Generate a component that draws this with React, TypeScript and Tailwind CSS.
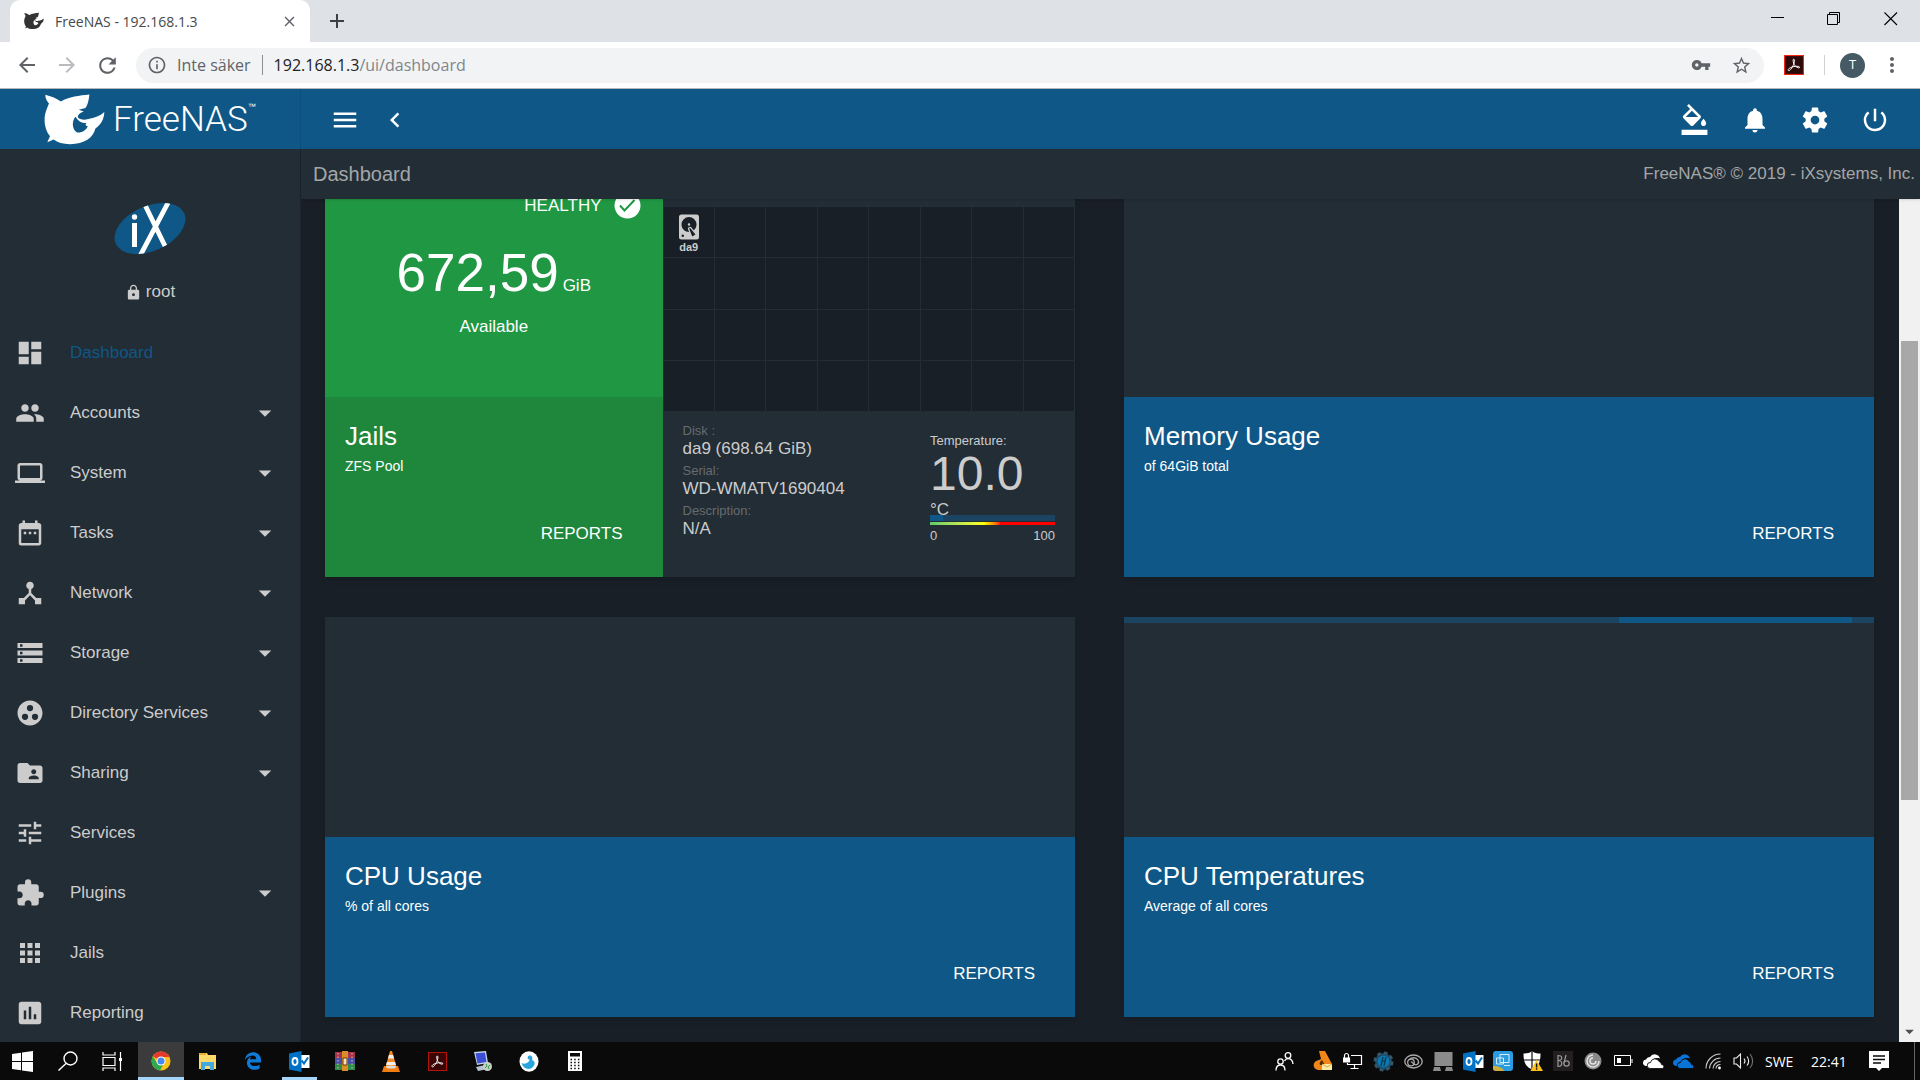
import React from "react";
import {
  MdDashboard, MdPeople, MdLaptop, MdDateRange, MdDeviceHub, MdStorage, MdGroupWork,
  MdFolderShared, MdTune, MdExtension, MdApps, MdAssessment, MdArrowDropDown, MdLock,
  MdMenu, MdChevronLeft, MdFormatColorFill, MdNotifications, MdPowerSettingsNew,
  MdVpnKey, MdStarBorder, MdMoreVert, MdArrowBack, MdArrowForward, MdRefresh,
  MdInfoOutline, MdClose, MdAdd,
} from "react-icons/md";
import { FaEdgeLegacy } from "react-icons/fa6";

const SHARK =
  "M47 28C62 32 80 38 94 48C118 34 150 30 180 27C178 45 175 58 168 68L148 73L163 78C150 83 142 90 146 97C156 104 166 104 176 101C196 98 212 92 225 80C224 102 215 118 198 130C192 158 165 177 122 177C100 177 84 172 72 163L53 171L61 153C47 135 42 112 46 88C49 74 54 64 58 54C51 47 47 38 47 28ZM138 94C127 106 126 132 143 142C160 143 172 132 175 122C168 122 166 118 172 112C158 116 146 108 138 94Z";

function Shark({ className }: { className?: string }) {
  return (
    <svg viewBox="43 26 184 153" className={className} aria-hidden="true">
      <path d={SHARK} fill="currentColor" fillRule="evenodd" />
    </svg>
  );
}

function Acrobat({ className, bg, edge }: { className?: string; bg: string; edge: string }) {
  return (
    <svg viewBox="0 0 20 20" className={className} aria-hidden="true">
      <rect x="0.5" y="0.5" width="19" height="19" fill={bg} stroke={edge} strokeWidth="1.2" />
      <path
        d="M9.6 4.2c1.4 0 .9 3-.2 5.6C8.2 12.6 6 16 4.5 15.6c-1.5-.6.8-3 4.2-3.800 3.400-.8 7-.7 6.900.5-.1 1.400-3.300.1-4.800-1.900C9.500 8.600 8.400 4.300 9.600 4.200Z"
        fill="none" stroke="#fff" strokeWidth="1"
      />
    </svg>
  );
}

function Cog({ className }: { className?: string }) {
  return (
    <svg viewBox="0 0 24 24" className={className} fill="currentColor" aria-hidden="true">
      <path d="M12,15.5A3.5,3.5 0 0,1 8.5,12A3.5,3.5 0 0,1 12,8.5A3.5,3.5 0 0,1 15.5,12A3.5,3.5 0 0,1 12,15.5M19.43,12.97C19.47,12.65 19.5,12.33 19.5,12C19.5,11.67 19.47,11.34 19.43,11L21.54,9.37C21.73,9.22 21.78,8.95 21.66,8.73L19.66,5.27C19.54,5.05 19.27,4.96 19.05,5.05L16.56,6.05C16.04,5.66 15.5,5.32 14.87,5.07L14.5,2.42C14.46,2.18 14.25,2 14,2H10C9.75,2 9.54,2.18 9.5,2.42L9.13,5.07C8.5,5.32 7.96,5.66 7.44,6.05L4.95,5.05C4.73,4.96 4.46,5.05 4.34,5.27L2.34,8.73C2.21,8.95 2.27,9.22 2.46,9.37L4.57,11C4.53,11.34 4.5,11.67 4.5,12C4.5,12.33 4.53,12.65 4.57,12.97L2.46,14.63C2.27,14.78 2.21,15.05 2.34,15.27L4.34,18.73C4.46,18.95 4.73,19.03 4.95,18.95L7.44,17.94C7.96,18.34 8.5,18.68 9.13,18.93L9.5,21.58C9.54,21.82 9.75,22 10,22H14C14.25,22 14.46,21.82 14.5,21.58L14.87,18.93C15.5,18.67 16.04,18.34 16.56,17.94L19.05,18.95C19.27,19.03 19.54,18.95 19.66,18.73L21.66,15.27C21.78,15.05 21.73,14.78 21.54,14.63L19.43,12.97Z" />
    </svg>
  );
}

function HardDisk({ className }: { className?: string }) {
  return (
    <svg viewBox="0 0 24 24" className={className} fill="currentColor" aria-hidden="true">
      <path d="M6,2H18A2,2 0 0,1 20,4V20A2,2 0 0,1 18,22H6A2,2 0 0,1 4,20V4A2,2 0 0,1 6,2M12,4A6,6 0 0,0 6,10C6,13.31 8.69,16 12.1,16L11.22,13.77C10.95,13.29 11.11,12.68 11.59,12.4L12.45,11.9C12.93,11.63 13.54,11.79 13.82,12.27L15.74,14.69C17.12,13.59 18,11.9 18,10A6,6 0 0,0 12,4M12,9A1,1 0 0,1 13,10A1,1 0 0,1 12,11A1,1 0 0,1 11,10A1,1 0 0,1 12,9M7,18A1,1 0 0,0 6,19A1,1 0 0,0 7,20A1,1 0 0,0 8,19A1,1 0 0,0 7,18M12.09,13.27L14.58,19.58L17.17,18.08L12.95,12.77L12.09,13.27Z" />
    </svg>
  );
}

function BrowserChrome() {
  return (
    <header className="shrink-0 font-['Open_Sans',sans-serif]">
      <div className="flex h-[42px] items-end justify-between bg-[#dee1e6]">
        <div className="flex h-full items-center">
          <div className="ml-[10px] flex h-full w-[300px] items-center rounded-t-[10px] bg-white pr-3 pl-[14px]">
            <Shark className="h-5 w-5 text-[#333]" />
            <span className="ml-[11px] flex-1 text-[14px] text-[#45484c]">FreeNAS - 192.168.1.3</span>
            <button aria-label="Close tab" className="text-[#5f6368]"><MdClose size={17} /></button>
          </div>
          <button aria-label="New tab" className="ml-[15px] text-[#3c4043]"><MdAdd size={24} /></button>
        </div>
        <div className="flex h-full items-start pt-3 text-black">
          <button aria-label="Minimize" className="flex w-[56px] justify-center">
            <svg width="14" height="14" viewBox="0 0 14 14"><path d="M0 5.5h13" stroke="currentColor" /></svg>
          </button>
          <button aria-label="Restore" className="flex w-[56px] justify-center">
            <svg width="14" height="14" viewBox="0 0 14 14"><path d="M.5 2.5h10v10H.5zM2.5 2.5v-2h10v10h-2" fill="none" stroke="currentColor" /></svg>
          </button>
          <button aria-label="Close" className="flex w-[58px] justify-center">
            <svg width="14" height="14" viewBox="0 0 14 14"><path d="M.5.5l12.5 12.5M13 .5L.5 13" stroke="currentColor" strokeWidth="1.1" /></svg>
          </button>
        </div>
      </div>
      <div className="flex h-[47px] items-center border-b border-[#b4b6b9] bg-white pr-4 pl-[15px] text-[#5f6368]">
        <button aria-label="Back" className="mr-4"><MdArrowBack size={24} /></button>
        <button aria-label="Forward" className="mr-4 text-[#b9bbbe]"><MdArrowForward size={24} /></button>
        <button aria-label="Reload" className="mr-4"><MdRefresh size={25} /></button>
        <div className="flex h-[35px] flex-1 items-center rounded-full bg-[#f1f3f4] pr-3 pl-[11px]">
          <MdInfoOutline size={20} />
          <span className="ml-[10px] text-[16px]">Inte säker</span>
          <span className="mx-[11px] h-5 w-px bg-[#8a8d91]" />
          <label className="flex flex-1 items-center text-[16px]">
            <span className="text-[#202124]">192.168.1.3</span>
            <input aria-label="Address" defaultValue="/ui/dashboard" className="min-w-0 flex-1 bg-transparent text-[#80868b] outline-none" />
          </label>
          <button aria-label="Passwords" className="mr-5"><MdVpnKey size={20} /></button>
          <button aria-label="Bookmark"><MdStarBorder size={21} /></button>
        </div>
        <button aria-label="Acrobat" className="ml-5"><Acrobat className="h-5 w-5" bg="#2b0a0a" edge="#f22613" /></button>
        <span className="mr-[15px] ml-5 h-5 w-px bg-[#cfd1d4]" />
        <button className="flex h-[25px] w-[25px] items-center justify-center rounded-full bg-[#455a64] text-[13px] text-white">T</button>
        <button aria-label="Menu" className="ml-[15px]"><MdMoreVert size={24} /></button>
      </div>
    </header>
  );
}

const NAV = [
  { label: "Dashboard", Icon: MdDashboard, active: true },
  { label: "Accounts", Icon: MdPeople, sub: true },
  { label: "System", Icon: MdLaptop, sub: true },
  { label: "Tasks", Icon: MdDateRange, sub: true },
  { label: "Network", Icon: MdDeviceHub, sub: true },
  { label: "Storage", Icon: MdStorage, sub: true },
  { label: "Directory Services", Icon: MdGroupWork, sub: true },
  { label: "Sharing", Icon: MdFolderShared, sub: true },
  { label: "Services", Icon: MdTune },
  { label: "Plugins", Icon: MdExtension, sub: true },
  { label: "Jails", Icon: MdApps },
  { label: "Reporting", Icon: MdAssessment },
];

function Sidebar() {
  return (
    <aside className="flex w-[301px] shrink-0 flex-col overflow-hidden border-r border-[#1d252c] bg-[#232d35] text-[#ccc]">
      <div className="flex h-[174px] shrink-0 flex-col items-center pt-[53px]">
        <svg width="72" height="53" viewBox="0 0 72 53" role="img" aria-label="iX">
          <defs>
            <clipPath id="ix"><ellipse cx="36" cy="26.5" rx="37.5" ry="22.5" transform="rotate(-24 36 26.5)" /></clipPath>
          </defs>
          <g clipPath="url(#ix)">
            <rect width="72" height="53" fill="#0e5786" />
            <path d="M31 3L51 44M55.5-2L26 54" stroke="#fff" strokeWidth="4.8" />
            <path d="M20.5 21v24" stroke="#fff" strokeWidth="5" />
            <circle cx="20.5" cy="15" r="2.7" fill="#fff" />
          </g>
        </svg>
        <div className="mt-[25px] flex items-center gap-1 text-[17px] leading-6">
          <MdLock size={17} />
          <span>root</span>
        </div>
      </div>
      <nav>
        {NAV.map(({ label, Icon, sub, active }) => {
          const body = (
            <>
              <Icon size={30} />
              <span className={active ? "ml-[25px] flex-1 text-[#0e5786]" : "ml-[25px] flex-1"}>{label}</span>
              {sub && <MdArrowDropDown size={30} />}
            </>
          );
          return sub ? (
            <button key={label} className="flex h-[60px] w-full items-center pr-5 pl-[15px] text-left text-[17px]">{body}</button>
          ) : (
            <a key={label} href="#" className="flex h-[60px] items-center pr-5 pl-[15px] text-[17px]">{body}</a>
          );
        })}
      </nav>
    </aside>
  );
}

function TopBar() {
  return (
    <div className="flex h-[60px] shrink-0 bg-[#0e5786] text-white">
      <a href="#" aria-label="FreeNAS home" className="flex w-[301px] items-center border-r border-[#0c4f7a] pl-[44px]">
        <Shark className="h-[51px] w-[61px]" />
        <span className="ml-2 font-['Roboto',sans-serif] text-[35px] leading-none font-light">FreeNAS</span>
        <span className="mb-6 text-[8px]">™</span>
      </a>
      <div className="flex flex-1 items-center pt-px pr-[30px] pl-[29px]">
        <button aria-label="Toggle menu"><MdMenu size={30} /></button>
        <button aria-label="Collapse" className="ml-5"><MdChevronLeft size={30} /></button>
        <div className="ml-auto flex gap-[30px]">
          <button aria-label="Theme"><MdFormatColorFill size={31} /></button>
          <button aria-label="Notifications"><MdNotifications size={30} /></button>
          <button aria-label="Settings"><Cog className="h-[30px] w-[30px]" /></button>
          <button aria-label="Power"><MdPowerSettingsNew size={30} /></button>
        </div>
      </div>
    </div>
  );
}

function CardFooter({ title, sub, green }: { title: string; sub: string; green?: boolean }) {
  return (
    <div className={green ? "flex h-[180px] flex-col bg-[#1e873b] px-5 pt-[21px] text-white" : "flex h-[180px] flex-col bg-[#0e5786] px-5 pt-[21px] text-white"}>
      <h2 className="text-[26px] leading-9">{title}</h2>
      <p className="text-[14px] leading-6">{sub}</p>
      <button className="mt-auto mr-5 mb-[31px] self-end text-[17px] leading-6">REPORTS</button>
    </div>
  );
}

function UsageCard({ title, sub, loading }: { title: string; sub: string; loading?: boolean }) {
  return (
    <section className="flex h-[400px] flex-col bg-[#232d35] shadow-md">
      <div className="flex-1">
        {loading && (
          <div className="h-[6px] bg-[#1b4362]">
            <div className="ml-[66%] h-full w-[31%] bg-[#0e5786]" />
          </div>
        )}
      </div>
      <CardFooter title={title} sub={sub} />
    </section>
  );
}

const DISK = [
  ["Disk :", "da9 (698.64 GiB)"],
  ["Serial:", "WD-WMATV1690404"],
  ["Description:", "N/A"],
];

function PoolCard() {
  return (
    <section className="flex h-[400px] bg-[#232d35] shadow-md">
      <div className="flex w-[45%] flex-col bg-[#209743] text-white">
        <div className="flex h-[220px] flex-col items-center">
          <div className="flex h-[30px] items-center gap-3 self-end pt-[27px] pr-[22px]">
            <span className="pt-px text-[17px] leading-5">HEALTHY</span>
            <svg width="27" height="27" viewBox="0 0 27 27" aria-hidden="true">
              <circle cx="13.5" cy="13.5" r="13" fill="#fff" />
              <path d="M6 13.5l4.5 5L20.5 8" fill="none" stroke="#209743" strokeWidth="2" />
            </svg>
          </div>
          <div className="mt-[36px] flex items-baseline gap-1">
            <span className="text-[53px] leading-[60px]">672,59</span>
            <span className="text-[17px] leading-6">GiB</span>
          </div>
          <span className="mt-3 text-[17px] leading-6">Available</span>
        </div>
        <CardFooter title="Jails" sub="ZFS Pool" green />
      </div>
      <div className="flex flex-1 flex-col pt-[30px] text-[#ccc]">
        <div className="grid h-[204px] grid-cols-8 grid-rows-4 gap-px px-px">
          {Array.from({ length: 32 }, (_, i) => (
            <div key={i} className="flex flex-col items-center bg-[#191f27] pt-[5px]">
              {i === 0 && (
                <>
                  <HardDisk className="h-[30px] w-[30px]" />
                  <span className="text-[11px] leading-[10px] font-bold">da9</span>
                </>
              )}
            </div>
          ))}
        </div>
        <div className="flex justify-between pt-3 pr-5 pl-5">
          <dl className="flex flex-col gap-1">
            {DISK.map(([k, v]) => (
              <div key={k}>
                <dt className="text-[13px] leading-4 text-[#666b70]">{k}</dt>
                <dd className="text-[17px] leading-5">{v}</dd>
              </div>
            ))}
          </dl>
          <div className="w-[125px] pt-[10px]">
            <div className="text-[13px] leading-4">Temperature:</div>
            <div className="text-[48px] leading-[49px]">10.0</div>
            <div className="h-[17px] text-[17px] leading-6">°C</div>
            <div className="h-[6px] bg-[#1b4362]">
              <div className="h-full w-[10%] bg-[#0e5786]" />
            </div>
            <div className="mt-px h-[3px] bg-linear-to-r from-[#5ecb6b] via-[#ffff00] via-43% to-[#ff0000] to-56%" />
            <div className="flex justify-between pt-[3px] text-[13px] leading-4">
              <span>0</span>
              <span>100</span>
            </div>
          </div>
        </div>
      </div>
    </section>
  );
}

function OutlookIcon() {
  return (
    <svg width="21" height="21" viewBox="0 0 21 21" aria-hidden="true">
      <rect x="10" y="4" width="10.5" height="13" fill="#fff" />
      <path d="M12.5 9.500l2.500 3L19 6.500" fill="none" stroke="#0072c6" strokeWidth="2" />
      <path d="M0 2.5L12.5 0v21L0 18.5z" fill="#0072c6" />
      <ellipse cx="6" cy="10.5" rx="2.5" ry="3.5" fill="none" stroke="#fff" strokeWidth="1.8" />
    </svg>
  );
}

function Cloud({ fill }: { fill: string }) {
  return (
    <svg width="21" height="15" viewBox="0 0 21 15" fill={fill} aria-hidden="true">
      <path d="M2.5 12A3.3 3.3 0 013 5.5 4 4 0 017 3a5.500 5.500 0 0110 1.500C12 3 9 5 8 8c-3 0-4 2-3.500 4z" />
      <path d="M7 14.500a3 3 0 01.5-6 4.500 4.500 0 018.500-1 3.500 3.500 0 012.500 3c3 .2 3 4 .5 4z" stroke="#0a0a0a" strokeWidth=".8" />
    </svg>
  );
}

const APPS: { name: string; icon: React.ReactNode; cls?: string }[] = [
  {
    name: "Chrome", cls: "flex w-[46px] items-center justify-center border-b-[3px] border-[#a5d5fb] bg-[#3b3b3b] pt-[3px]",
    icon: (
      <svg width="20" height="20" viewBox="0 0 20 20">
        <circle cx="10" cy="10" r="9.5" fill="#fbc116" />
        <path d="M10 10L1.8 5.2A9.5 9.5 0 0118.2 5.2L18.5 6H10z" fill="#e33b2e" />
        <path d="M1.8 5.2A9.5 9.5 0 009 19.5l4-7.5L6 12z" fill="#2da94f" />
        <circle cx="10" cy="10" r="4.5" fill="#fff" /><circle cx="10" cy="10" r="3.5" fill="#4688f1" />
      </svg>
    ),
  },
  {
    name: "Explorer",
    icon: (
      <svg width="19" height="19" viewBox="0 0 19 19">
        <path d="M1 1h8l1 2h8v14H1z" fill="#ffd869" /><path d="M1 1h7v2H1z" fill="#e8b02c" />
        <path d="M3 18v-8h13v8h-4v-4H7v4z" fill="#3fa9e0" />
      </svg>
    ),
  },
  { name: "Edge", icon: <FaEdgeLegacy size={18} className="text-[#0f7bd8]" /> },
  { name: "Outlook", cls: "relative flex w-[46px] items-center justify-center", icon: <OutlookIcon /> },
  {
    name: "WinRAR",
    icon: (
      <svg width="20" height="20" viewBox="0 0 20 20">
        <path d="M0 1h20v6H0z" fill="#a8324a" /><path d="M0 7h20v6H0z" fill="#4a4fa8" /><path d="M0 13h20v6H0z" fill="#2f8a4b" />
        <path d="M7 0h6v20H7z" fill="#d98d26" /><path d="M8 7h4v7H8z" fill="#f4e2b8" stroke="#6b3b10" />
        <path d="M3 2v16M17 2v16" stroke="#d8c9a0" strokeDasharray="1.5 2" />
      </svg>
    ),
  },
  {
    name: "VLC",
    icon: (
      <svg width="18" height="21" viewBox="0 0 18 21">
        <path d="M8 0h2l4.5 16h-11z" fill="#f58a1f" /><path d="M6.9 4h4.2l1 3.5H5.9zM4.9 11h8.200l.8 3H4.100z" fill="#eee" />
        <path d="M2 15h14l2 6H0z" fill="#f07c12" /><ellipse cx="9" cy="16" rx="5" ry="1.5" fill="#ddd" />
      </svg>
    ),
  },
  { name: "Acrobat", icon: <Acrobat className="h-[19px] w-[19px]" bg="#3a0505" edge="#b3130b" /> },
  {
    name: "Remote Desktop",
    icon: (
      <svg width="20" height="21" viewBox="0 0 20 21">
        <path d="M1 1l12-1 2 12-11 2z" fill="#c9d6ea" /><path d="M2.5 2.3l9.500-.8 1.500 9.500-9 1.500z" fill="#3a4fd6" />
        <path d="M3 16l9-2 3 4-10 2z" fill="#b9c3cf" /><circle cx="14.5" cy="15.5" r="4.5" fill="#c8d0c8" />
        <path d="M12 17l2-2-1-2M17 14l-2 2 1 2" stroke="#2c9b3c" fill="none" />
      </svg>
    ),
  },
  {
    name: "Maps",
    icon: (
      <svg width="20" height="21" viewBox="0 0 20 21">
        <ellipse cx="10" cy="10.5" rx="9.5" ry="10.2" fill="#fff" />
        <path d="M2.5 12c4 2 8-1 8-3.500C8 8.500 8 5 10.500 4.500S14 7 13 9c3 1 4.500 5-1 8.500C8 19 4 17 2.500 12z" fill="#28a5dc" />
      </svg>
    ),
  },
  {
    name: "Calculator",
    icon: (
      <svg width="14" height="20" viewBox="0 0 14 20">
        <path d="M0 0h14v20H0z" fill="#fff" /><path d="M2 2h10v3.5H2z" fill="#0a0a0a" />
        <path d="M2.5 8.5h10M2.5 11.5h10M2.5 14.5h10M2.5 17.5h10" stroke="#0a0a0a" strokeWidth="1.5" strokeDasharray="1.5 2.2" />
      </svg>
    ),
  },
];

const TRAY: { name: string; icon: React.ReactNode }[] = [
  {
    name: "Drive",
    icon: (
      <svg width="20" height="20" viewBox="0 0 20 20">
        <path d="M6 0h6l7 13-4 6H5c-6-1-6-9 1-10l2-1z" fill="#f0861a" /><path d="M9 9l3 5H7c-1-2 0-4 2-5z" fill="#5b2d05" />
        <path d="M9 13h10v6H9z" fill="#fbe9a8" /><path d="M9 13l5 3 5-3" stroke="#d9a93a" fill="none" />
      </svg>
    ),
  },
  {
    name: "Network lock",
    icon: (
      <svg width="20" height="18" viewBox="0 0 20 18" fill="none" stroke="#fff" strokeWidth="1.2">
        <path d="M8 3.500h10.500v9H4.500V11M11.500 13v3.500M7.500 16.500h8" /><path d="M1.500 6V3.500a2 2 0 014 0V6" />
        <path d="M.5 6h6v4h-6z" fill="#fff" />
      </svg>
    ),
  },
  {
    name: "HP",
    icon: (
      <svg width="21" height="21" viewBox="0 0 21 21">
        <circle cx="10.5" cy="10.5" r="8.5" fill="#1c4a68" stroke="#35566c" strokeWidth="3" strokeDasharray="3.700 2.980" />
        <circle cx="10.5" cy="10.5" r="6" fill="#0c78b0" /><path d="M8 15l2-9M11 15l2-9M9 10h3" stroke="#0b3550" strokeWidth="1.2" />
      </svg>
    ),
  },
  {
    name: "Creative Cloud",
    icon: (
      <svg width="19" height="15" viewBox="0 0 19 15" fill="none" stroke="#aaa" strokeWidth="1.3">
        <ellipse cx="9.5" cy="7.5" rx="8.7" ry="6.5" /><circle cx="7" cy="8.500" r="3.300" /><path d="M5 6a5 4 0 019 0c2 4-2 6-4 4L7 7.500" />
      </svg>
    ),
  },
  {
    name: "Devices",
    icon: (
      <svg width="20" height="19" viewBox="0 0 20 19" fill="#8b8b8b">
        <path d="M1.5 0h18v14h-18zM1 15h6l1 4H0zM13 15h6l1 4h-8z" />
      </svg>
    ),
  },
  { name: "Outlook", icon: <OutlookIcon /> },
  {
    name: "Intel",
    icon: (
      <svg width="20" height="20" viewBox="0 0 20 20">
        <rect width="20" height="20" rx="3" fill="#2b9be0" /><path d="M0 15c6 0 10 2 11 5H3a3 3 0 01-3-3z" fill="#cfae3e" />
        <path d="M7 3.500h9v8H7zM3.500 7h7v6h-7zM11 14.500h6" fill="none" stroke="#d3eefc" strokeWidth="1" />
      </svg>
    ),
  },
  {
    name: "Security",
    icon: (
      <svg width="20" height="20" viewBox="0 0 20 20">
        <path d="M9 0c2 2 5 2.500 8.500 2.500 0 8-1.500 13-8.500 16C2 15.500.5 10.500.5 2.500 4 2.500 7 2 9 0z" fill="#fff" />
        <path d="M9 0v19M0 9h18" stroke="#0a0a0a" strokeWidth="1.2" /><path d="M13.5 9l6.500 11H7.500z" fill="#fcbf1c" />
        <path d="M13.6 12.500v4M13.600 17.300v1.500" stroke="#111" strokeWidth="1.4" />
      </svg>
    ),
  },
  {
    name: "Bang & Olufsen",
    icon: (
      <svg width="20" height="20" viewBox="0 0 20 20">
        <rect width="20" height="20" fill="#231f20" />
        <path d="M5 4v12M5 4.500c5 0 5 5 0 5 5 0 5 6 0 6M13 4l-2 8" fill="none" stroke="#999" strokeWidth="1.2" /><circle cx="13.5" cy="12.5" r="2.7" fill="none" stroke="#999" strokeWidth="1.2" />
      </svg>
    ),
  },
  {
    name: "Sync",
    icon: (
      <svg width="18" height="18" viewBox="0 0 18 18">
        <circle cx="9" cy="9" r="8.5" fill="#8a8a8a" /><path d="M15 9a6 6 0 11-6-6M12 9a3 3 0 11-3-3" fill="none" stroke="#e4e4e4" strokeWidth="1.5" />
      </svg>
    ),
  },
  {
    name: "Battery",
    icon: (
      <svg width="19" height="12" viewBox="0 0 19 12" fill="none" stroke="#fff">
        <path d="M.5.5h16v10H.5zM18 4v4" /><path d="M3 3h4v5H3z" fill="#fff" stroke="none" />
      </svg>
    ),
  },
  { name: "OneDrive", icon: <Cloud fill="#fff" /> },
  { name: "OneDrive Business", icon: <Cloud fill="#0a74d6" /> },
  {
    name: "Wi-Fi",
    icon: (
      <svg width="17" height="17" viewBox="0 0 17 17" fill="none" stroke="#ccc" strokeWidth="1.1">
        <path d="M1 15.500A14.500 14.500 0 0115.500 1M4.500 15.500a11 11 0 0111-10.500M8 15.500A7.500 7.500 0 0115.500 8.500M11 15.500a4.500 4.500 0 014.500-4" />
        <circle cx="14.5" cy="15" r="1.4" fill="#fff" stroke="none" />
      </svg>
    ),
  },
  {
    name: "Volume",
    icon: (
      <svg width="21" height="18" viewBox="0 0 21 18" fill="none" stroke="#eee" strokeWidth="1.1">
        <path d="M1 6h2.500l4-4v14l-4-4H1z" /><path d="M11 6.500c1.200 1.500 1.200 3.500 0 5M14 4.500c2.200 2.500 2.200 6.500 0 9" /><path d="M17 2c3.500 4 3.500 10 0 14" stroke="#777" />
      </svg>
    ),
  },
];

function Taskbar() {
  return (
    <footer className="flex h-[38px] shrink-0 items-stretch bg-[#0a0a0a] font-['Open_Sans',sans-serif] text-white">
      <button aria-label="Start" className="flex w-[45px] items-center justify-center">
        <svg width="21" height="21" viewBox="0 0 21 21" fill="#fff"><path d="M0 3l9-1.200V10H0zM10 1.600L21 0v10H10zM0 11h9v8.300L0 18zM10 11h11v10l-11-1.500z" /></svg>
      </button>
      <button aria-label="Search" className="flex w-[45px] items-center justify-center">
        <svg width="20" height="20" viewBox="0 0 20 20" fill="none" stroke="#fff" strokeWidth="1.4"><circle cx="12.5" cy="7.5" r="6.5" /><path d="M8 12.500L.5 19.500" /></svg>
      </button>
      <button aria-label="Task view" className="mr-[3px] flex w-[45px] items-center justify-center">
        <svg width="21" height="19" viewBox="0 0 21 19" fill="none" stroke="#fff" strokeWidth="1.2"><path d="M1 0v3h12V0M1 5.500h12v8H1zM1 19v-3h12v3M18.500 0v19" /><path d="M17 6h3v3h-3z" fill="#fff" stroke="none" /></svg>
      </button>
      {APPS.map((a) => (
        <button key={a.name} aria-label={a.name} className={a.cls ?? "flex w-[46px] items-center justify-center"}>
          {a.icon}
          {a.name === "Outlook" && <span className="absolute bottom-0 h-[3px] w-[35px] bg-[#a5d5fb]" />}
        </button>
      ))}
      <div className="ml-auto flex items-center">
        <button aria-label="People" className="mr-[14px]">
          <svg width="19" height="19" viewBox="0 0 19 19" fill="none" stroke="#fff" strokeWidth="1.3"><circle cx="5.5" cy="9.5" r="2.7" /><circle cx="13" cy="3.5" r="2.8" /><path d="M1 18.500c0-3.500 2-5.500 4.500-5.500s4.500 2 4.500 5.500M9.500 9c.7-1.500 2-2.300 3.500-2.300 2.700 0 4.700 2 5 5.300" /></svg>
        </button>
        {TRAY.map((t) => (
          <button key={t.name} aria-label={t.name} className="flex w-[30px] justify-center">{t.icon}</button>
        ))}
        <span className="ml-[7px] w-[46px] text-[14px]">SWE</span>
        <span className="w-[48px] text-[14px]">22:41</span>
        <button aria-label="Notifications" className="mr-[25px] ml-[10px]">
          <svg width="20" height="20" viewBox="0 0 20 20"><path d="M0 0h20v17h-7l-3 3-3-3H0z" fill="#fff" /><path d="M4 5h12M4 8.500h12M4 12h8" stroke="#0a0a0a" strokeWidth="1.3" /></svg>
        </button>
        <span className="mr-[5px] h-[38px] w-px bg-[#666]" />
      </div>
    </footer>
  );
}

export default function App() {
  return (
    <div className="flex h-screen flex-col overflow-hidden bg-[#191f27] font-['Liberation_Sans',Arial,sans-serif]">
      <BrowserChrome />
      <TopBar />
      <div className="flex min-h-0 flex-1">
        <Sidebar />
        <div className="flex min-w-0 flex-1 flex-col">
          <div className="z-10 flex h-[50px] shrink-0 items-center justify-between bg-[#232d35] pr-[5px] pl-3 text-[#a3a6a9] shadow">
            <span className="text-[20px]">Dashboard</span>
            <span className="text-[17px]">FreeNAS® © 2019 - iXsystems, Inc.</span>
          </div>
          <div className="flex min-h-0 flex-1">
            <main className="min-w-0 flex-1 overflow-hidden pr-[25px] pl-6">
              <div className="-mt-[22px] grid grid-cols-2 gap-x-[49px] gap-y-10">
                <PoolCard />
                <UsageCard title="Memory Usage" sub="of 64GiB total" />
                <UsageCard title="CPU Usage" sub="% of all cores" />
                <UsageCard title="CPU Temperatures" sub="Average of all cores" loading />
              </div>
            </main>
            <div className="flex w-[21px] flex-col items-center bg-[#f1f1f1] pt-[142px]">
              <div className="h-[459px] w-[17px] bg-[#a8a8a8]" />
              <MdArrowDropDown size={21} className="mt-auto text-[#505050]" />
            </div>
          </div>
        </div>
      </div>
      <Taskbar />
    </div>
  );
}
